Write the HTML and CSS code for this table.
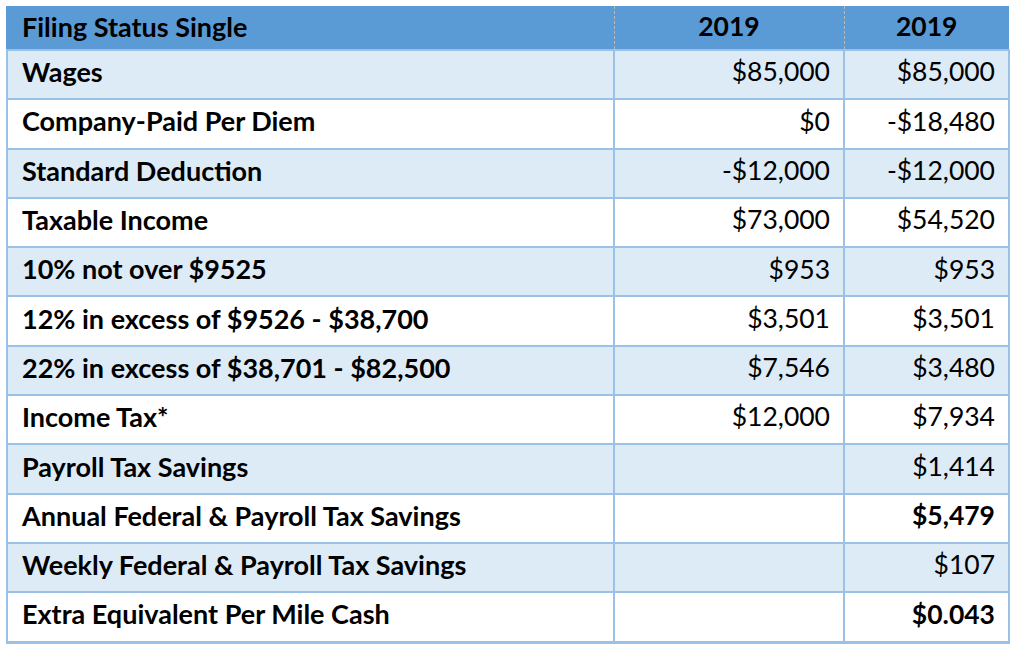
FILE: index.html
```html
<!DOCTYPE html>
<html>
<head>
<meta charset="utf-8">
<link rel="stylesheet" href="styles.css">
</head>
<body>
<table class="tax">
  <colgroup>
    <col class="c-label">
    <col class="c-a">
    <col class="c-b">
  </colgroup>
  <thead>
    <tr>
      <th class="label">Filing Status Single</th>
      <th class="year">2019</th>
      <th class="year">2019</th>
    </tr>
  </thead>
  <tbody>
    <tr class="alt"><td class="label">Wages</td><td class="num">$85,000</td><td class="num">$85,000</td></tr>
    <tr><td class="label">Company-Paid Per Diem</td><td class="num">$0</td><td class="num">-$18,480</td></tr>
    <tr class="alt"><td class="label">Standard Deduction</td><td class="num">-$12,000</td><td class="num">-$12,000</td></tr>
    <tr><td class="label">Taxable Income</td><td class="num">$73,000</td><td class="num">$54,520</td></tr>
    <tr class="alt"><td class="label">10% not over $9525</td><td class="num">$953</td><td class="num">$953</td></tr>
    <tr><td class="label">12% in excess of $9526 - $38,700</td><td class="num">$3,501</td><td class="num">$3,501</td></tr>
    <tr class="alt"><td class="label">22% in excess of $38,701 - $82,500</td><td class="num">$7,546</td><td class="num">$3,480</td></tr>
    <tr><td class="label">Income Tax*</td><td class="num">$12,000</td><td class="num">$7,934</td></tr>
    <tr class="alt"><td class="label">Payroll Tax Savings</td><td class="num"></td><td class="num">$1,414</td></tr>
    <tr><td class="label">Annual Federal &amp; Payroll Tax Savings</td><td class="num"></td><td class="num strong">$5,479</td></tr>
    <tr class="alt"><td class="label">Weekly Federal &amp; Payroll Tax Savings</td><td class="num"></td><td class="num">$107</td></tr>
    <tr><td class="label">Extra Equivalent Per Mile Cash</td><td class="num"></td><td class="num strong">$0.043</td></tr>
  </tbody>
</table>
</body>
</html>
```

FILE: styles.css
```css
html, body {
  margin: 0;
  padding: 0;
  background: #ffffff;
}

body {
  padding: 6px 0 0 6px;
  font-family: "Lato", "Liberation Sans", sans-serif;
  color: #000000;
}

.tax {
  border-collapse: collapse;
  table-layout: fixed;
  width: 1002px;
  font-size: 26.5px;
  line-height: 1;
}

.c-label { width: 607px; }
.c-a { width: 230px; }
.c-b { width: 165px; }

.tax thead th {
  background: #5b9bd5;
  height: 41px;
  padding: 0 0 2px 0;
  font-weight: 700;
  border-left: 1px dashed #b9b9b9;
  border-bottom: 2px solid #9bc2e6;
  vertical-align: middle;
}

.tax thead th:first-child {
  border-left: 2px solid #5b9bd5;
}

.tax thead th.label {
  text-align: left;
  padding-left: 14px;
  font-size: 27px;
}

.tax thead th.year {
  text-align: center;
}

.tax tbody td {
  height: 41.3px;
  padding: 0 0 6px 0;
  border: 2px solid #9bc2e6;
  background: #ffffff;
  vertical-align: middle;
}

.tax tbody tr.alt td {
  background: #ddebf7;
}

.tax tbody tr:last-child td {
  border-bottom-width: 3px;
}

.tax td.label {
  font-weight: 700;
  padding-left: 14px;
  font-size: 27px;
}

.tax td.num {
  text-align: right;
  padding-right: 13px;
  font-weight: 400;
}

.tax td.num.strong {
  font-weight: 700;
}
```
